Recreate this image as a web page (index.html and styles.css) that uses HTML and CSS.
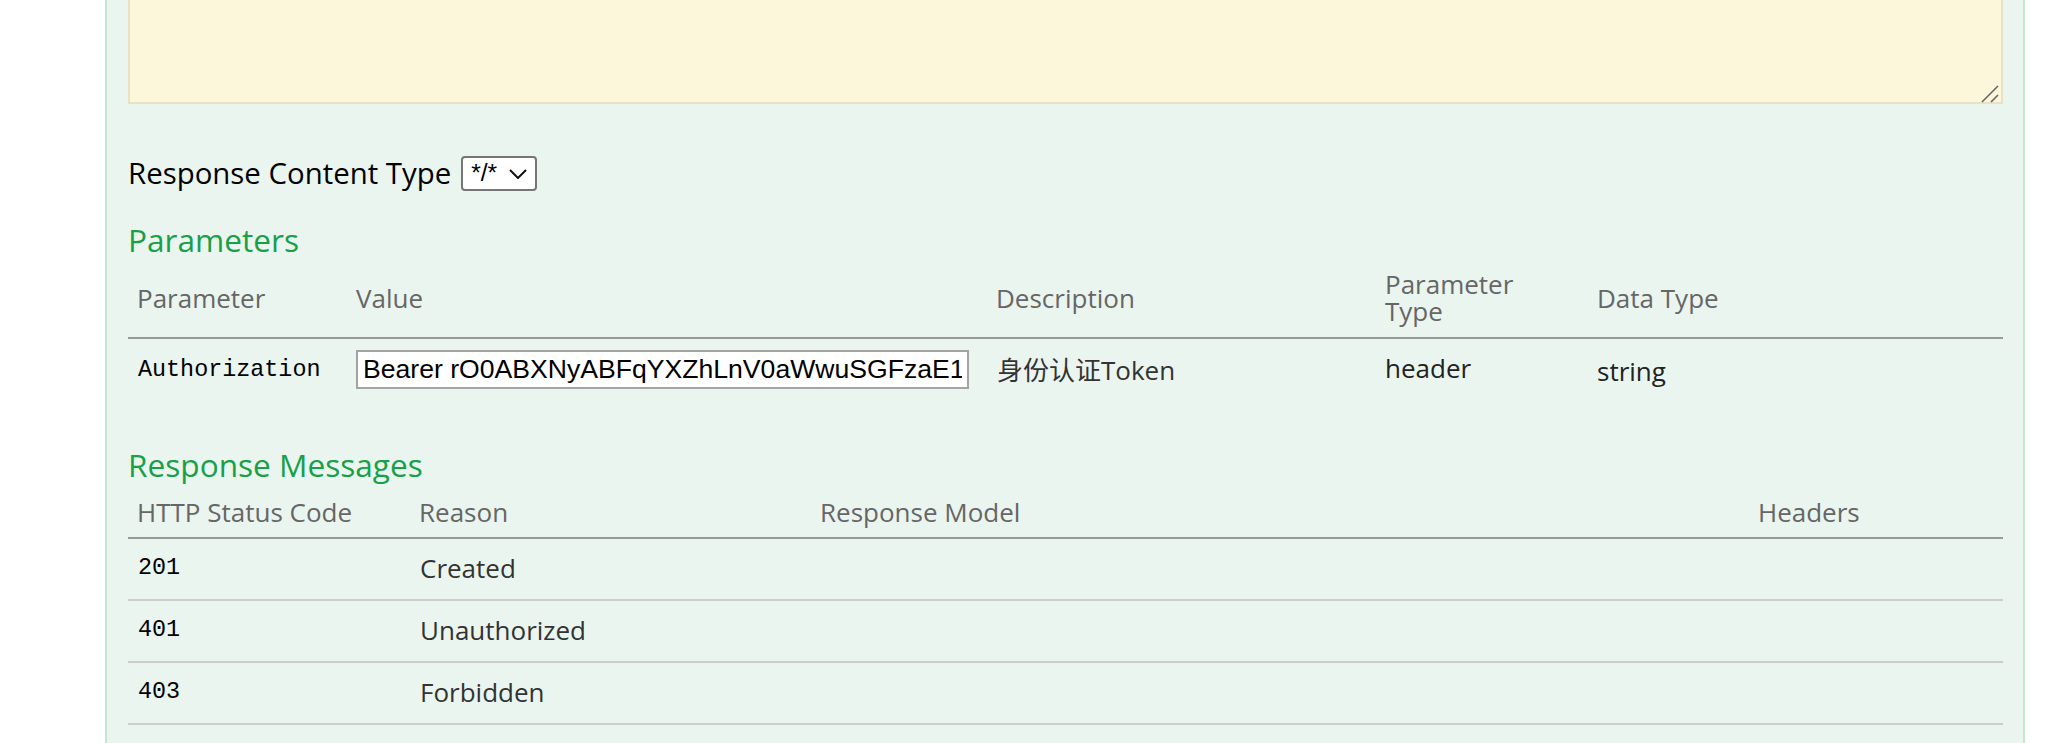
FILE: index.html
```html
<!DOCTYPE html>
<html lang="zh-CN">
<head>
<meta charset="utf-8">
<title>Operation</title>
<link rel="stylesheet" href="styles.css">
</head>
<body>
<div class="operation">
  <div class="textarea-wrap">
    <textarea class="body-param" aria-label="body"></textarea>
    <svg class="grip" width="18" height="18" viewBox="0 0 18 18"><path d="M1 17 L17 1 M10 17 L17 10" fill="none" stroke="#666" stroke-width="1.6"/></svg>
  </div>
  <div class="content-type">
    <span class="ct-label">Response Content Type</span>
    <div class="select">
      <span class="select-text">*/*</span>
      <svg class="chevron" width="18" height="10" viewBox="0 0 18 10"><path d="M1 1 L9 9 L17 1" fill="none" stroke="#111" stroke-width="2"/></svg>
    </div>
  </div>
  <h4 class="section-title">Parameters</h4>
  <table class="fullwidth params">
    <colgroup><col class="w-param"><col class="w-value"><col class="w-desc"><col class="w-ptype"><col class="w-dtype"></colgroup>
    <thead>
      <tr><th>Parameter</th><th>Value</th><th>Description</th><th class="ptype"><span class="line">Parameter</span><span class="line">Type</span></th><th>Data Type</th></tr>
    </thead>
    <tbody>
      <tr>
        <td class="code">Authorization</td>
        <td class="value-cell"><input class="param-input" type="text" value="Bearer rO0ABXNyABFqYXZhLnV0aWwuSGFzaE1"></td>
        <td class="desc">身份认证Token</td>
        <td class="ptype-cell">header</td>
        <td class="dtype">string</td>
      </tr>
    </tbody>
  </table>
  <h4 class="section-title second">Response Messages</h4>
  <table class="fullwidth responses">
    <colgroup><col class="w-code"><col class="w-reason"><col class="w-model"><col class="w-headers"></colgroup>
    <thead>
      <tr><th>HTTP Status Code</th><th>Reason</th><th>Response Model</th><th>Headers</th></tr>
    </thead>
    <tbody>
      <tr><td class="code">201</td><td>Created</td><td></td><td></td></tr>
      <tr><td class="code">401</td><td>Unauthorized</td><td></td><td></td></tr>
      <tr><td class="code">403</td><td>Forbidden</td><td></td><td></td></tr>
    </tbody>
  </table>
</div>
</body>
</html>
```
FILE: styles.css
```css
html, body {
  margin: 0;
  padding: 0;
  background: #ffffff;
}
body {
  font-family: "Open Sans", "Noto Sans", "Noto Sans CJK SC", sans-serif;
  overflow: hidden;
}
.operation {
  margin: -36px 0 0 105px;
  width: 1920px;
  box-sizing: border-box;
  border-left: 2px solid #c3e8d2;
  border-right: 2px solid #c3e8d2;
  background: #ebf5ef;
  padding: 0 20px 40px 21px;
}
.textarea-wrap {
  position: relative;
}
.body-param {
  display: block;
  width: 100%;
  height: 140px;
  box-sizing: border-box;
  margin: 0;
  border: 2px solid #e8e1c4;
  background: #fcf6db;
  outline: none;
  resize: none;
}
.grip {
  position: absolute;
  right: 4px;
  bottom: 1px;
}
.content-type {
  display: flex;
  align-items: center;
  gap: 10px;
  margin-top: 52px;
  height: 35px;
}
.ct-label {
  font-size: 29.4px;
  line-height: 35px;
  color: #000;
}
.select {
  display: flex;
  align-items: center;
  gap: 12px;
  width: 76px;
  height: 35px;
  box-sizing: border-box;
  padding: 0 8px;
  border: 2px solid #767676;
  border-radius: 4px;
  background: #fff;
}
.select-text {
  font-family: "Liberation Sans", Arial, sans-serif;
  font-size: 24.6px;
  color: #000;
  line-height: 1;
}
.chevron {
  flex: none;
}
.section-title {
  margin: 29px 0 0;
  font-size: 31.6px;
  font-weight: normal;
  line-height: 40px;
  color: #18a048;
}
.section-title.second {
  margin-top: 45px;
}
.fullwidth {
  width: 100%;
  border-collapse: collapse;
  table-layout: fixed;
}
.fullwidth th {
  text-align: left;
  font-weight: normal;
  color: #666;
  font-size: 26px;
  line-height: 27px;
  padding: 11px 9px 12px;
  border-bottom: 2px solid #999;
  vertical-align: middle;
}
.fullwidth th.ptype .line {
  display: block;
  height: 27px;
  line-height: 27px;
  overflow: visible;
}
.fullwidth td {
  font-size: 26px;
  padding: 11px 9px;
  line-height: 36px;
  vertical-align: middle;
  color: #222;
}
.fullwidth td.code {
  font-family: "Liberation Mono", "DejaVu Sans Mono", monospace;
  font-size: 23.4px;
  color: #000;
  padding-left: 10px;
}
.w-param { width: 219px; }
.w-value { width: 640px; }
.w-desc { width: 389px; }
.w-ptype { width: 212px; }
.w-dtype { width: 415px; }
.value-cell {
  padding-left: 10px;
}
.param-input {
  display: block;
  width: 613px;
  height: 39px;
  box-sizing: border-box;
  margin: 0;
  padding: 0 5px;
  border: 2px solid #a3a3a3;
  background: #fff;
  font-family: "Liberation Sans", Arial, sans-serif;
  font-size: 26.6px;
  color: #000;
  outline: none;
}
.params td.desc {
  color: #333;
  padding-left: 10px;
}
.params td.ptype-cell {
  padding-top: 9px;
  padding-bottom: 13px;
}
.params td.dtype {
  padding-top: 12px;
  padding-bottom: 10px;
}
.w-code { width: 282px; }
.w-reason { width: 401px; }
.w-model { width: 938px; }
.w-headers { width: 254px; }
.responses th {
  padding: 14px 9px 11px;
}
.responses td {
  padding: 11px 10px 12px;
  line-height: 37px;
  border-bottom: 2px solid #cccccc;
  color: #333;
}
```
